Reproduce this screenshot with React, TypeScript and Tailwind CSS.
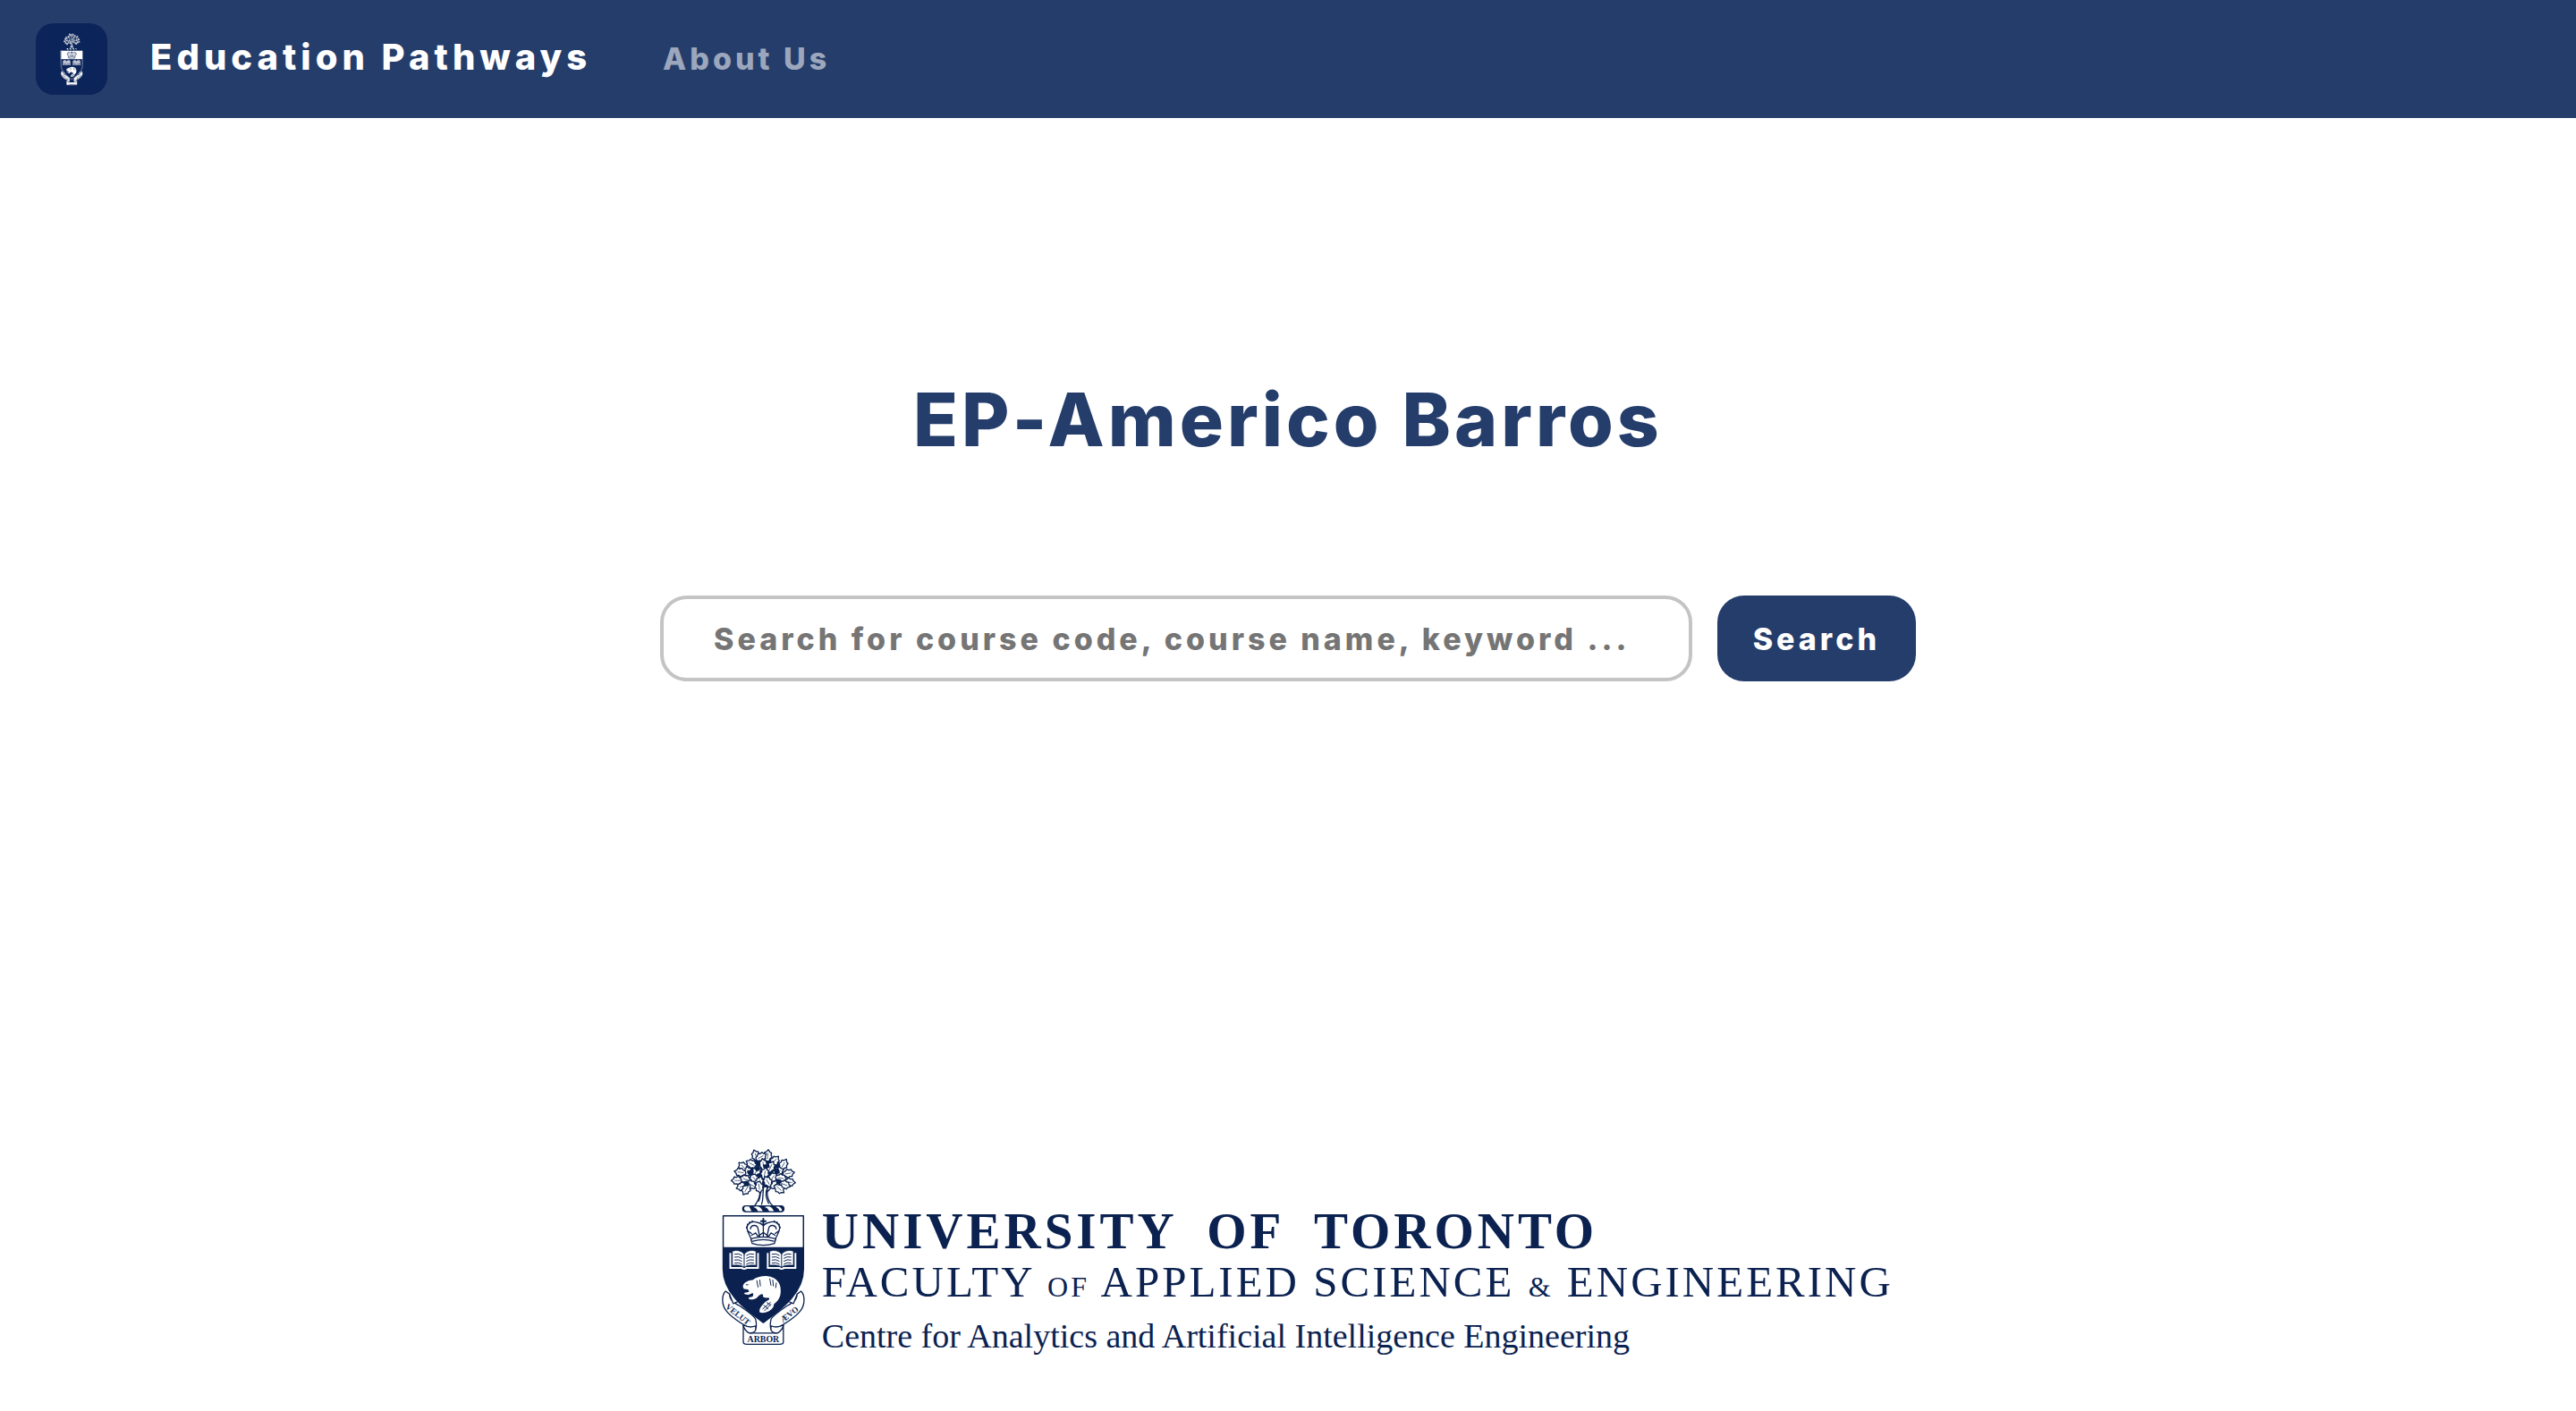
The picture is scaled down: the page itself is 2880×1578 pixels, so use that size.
import type { FormEvent } from 'react';

const LEAVES: [number, number, number][] = [
  [165, 62, -20], [205, 62, 5], [182, 66, 60], [228, 80, 40], [150, 90, -60], [190, 92, -10],
  [215, 100, 25], [122, 100, -45], [258, 92, 30], [240, 115, 70], [140, 118, -20], [168, 112, 30],
  [112, 118, -80], [275, 122, 80], [102, 146, -90], [130, 142, -70], [160, 140, -40], [195, 122, 10],
  [222, 136, 35], [250, 138, 100], [278, 152, 95], [118, 166, -110], [148, 160, -60], [176, 152, 20],
  [205, 150, -30], [232, 160, 60], [262, 160, 110], [132, 176, -150], [176, 168, 170], [244, 174, 130],
];

const BOOK_X = [75, 202];

function Crest({ ink, outline, className }: { ink: string; outline: string; className: string }) {
  return (
    <svg viewBox="40 30 300 680" className={className} fill="none" strokeLinejoin="round" strokeLinecap="round" aria-hidden="true">
      {/* tree */}
      <g stroke={ink} strokeWidth="4" fill="#fff">
        <path d="M172 150c10 30 10 55-12 82h62c-24-22-22-52-14-82l-16 16z" />
        <path d="M192 165c-6 20 0 40-8 62M204 170c-10 20-4 36 4 54M178 172c4 14 2 30-4 44M166 160l16 26M226 160l-22 24" fill="none" />
        <path d="M150 80l90 0 20 60-40 30-80-10-10-30z" fill={ink} />
        {LEAVES.map(([x, y, a], i) => (
          <g key={i} transform={`translate(${x} ${y}) rotate(${a})`}>
            <path d="M0-21l6 8 6 2-1 8 4 6-6 6-2 7-7 3-7-3-2-7-6-6 4-6-1-8 6-2z" />
            <path d="M0-8v18" strokeWidth="2" />
          </g>
        ))}
        <path d="M160 104l14-6 4 10-10 6zM136 116l14-6 4 16-10 4zM226 108l14-2 4 14-12 4zM190 94l18-2 2 8-16 4zM126 150l14 2-2 12-12-2zM234 142l14 2 2 10-14 2z" fill={ink} />
      </g>
      {/* wreath */}
      <rect x="120" y="232" width="140" height="20" rx="10" fill={ink} stroke={ink} strokeWidth="4" />
      <g fill="#fff">
        <path d="M128 234h14l8 16h-18q-12-6-4-16zM166 234q14-2 22 16h-16q-4-10-16-14zM204 234q14-2 22 16h-16q-4-10-16-14zM238 234q12 0 16 14l-8 2q-4-10-14-14z" />
      </g>
      {/* ribbon tails */}
      <g fill="#fff" stroke={ink} strokeWidth="4">
        <path d="M62 522c-14 14-14 46 2 66 20 26 54 46 96 68 8-8 8-20 4-38-2-10-22-24-54-46-24-14-36-24-34-40z" />
        <path d="M318 522c14 14 14 46-2 66-20 26-54 46-96 68-8-8-8-20-4-38 2-10 22-24 54-46 24-14 36-24 34-40z" />
        <path d="M76 534l12 30 18-8-8-30M304 534l-12 30-18-8 8-30" />
        <path d="M122 636v58q0 8 12 8h112q12 0 12-8v-58q-8 18-24 28h-88q-16-10-24-28z" />
        <path d="M122 636q20 12 42 4v14q-4 10-22 10-18-10-20-28zM258 636q-20 12-42 4v14q4 10 22 10 18-10 20-28z" />
      </g>
      {/* shield */}
      <path d="M54 266h272v180c0 76-60 126-136 182C114 572 54 522 54 446z" fill={ink} stroke={outline} strokeWidth="5" />
      <path d="M56 268h268v104H56z" fill="#fff" />
      {/* crown */}
      <g stroke={ink} strokeWidth="4" fill="#fff">
        <path d="M150 350c-4-18-14-26-16-44 2-14 18-24 34-18 10 2 18 6 22 12 4-6 12-10 22-12 16-6 32 4 34 18-2 18-12 26-16 44z" />
        <path d="M146 310c4-16 24-14 26 0l6 28M234 310c-4-16-24-14-26 0l-6 28M190 300v40M150 332l14-8 8 12 18-14 18 14 8-12 14 8M138 318l12 8M242 318l-12 8" />
        <path d="M190 276v20M182 284h16" strokeWidth="6" />
        <path d="M148 344q42-12 84 0l-4 16q-38 12-76 0z" />
        <path d="M154 352q36-10 72 0" />
      </g>
      <path d="M134 306q2-22 28-22M246 306q-2-22-28-22" stroke={ink} strokeWidth="6" strokeDasharray="1 9" />
      {/* books */}
      {BOOK_X.map((x) => (
        <g key={x} transform={`translate(${x} 384)`}>
          <path d="M0 8h6v48h38l6 4 6-4h38V8h6v54H60q-10 6-20 0H0z" fill="#fff" />
          <path d="M50 12Q34-6 10 2v48q26-4 40 6 14-10 40-6V2Q66-6 50 12z" fill="#fff" stroke={ink} strokeWidth="2" />
          <path d="M50 12v42M18 12q14-4 24 4M18 22q14-4 24 4M18 32q14-4 24 4M18 42q14-4 24 4M82 12q-14-4-24 4M82 22q-14-4-24 4M82 32q-14-4-24 4M82 42q-14-4-24 4" stroke={ink} strokeWidth="3" />
        </g>
      ))}
      {/* beaver */}
      <path
        d="M122 500q8-14 32-16 16-14 46-14 30 2 42 22 10 16 6 42-4 18-22 32 0 14-18 24-16 8-30 4-4-8 6-22 12-16 26-22 2-6-4-6-12 2-18-4 4-8-4-8-10 4-14 10-8 8-24 8-8-2-6-6l14-4q4-8 0-12l-14 6q-14 0-16-6l18-4-4-8-14-2q-6-6-2-14z"
        fill="#fff"
      />
      <path d="M168 486l4 22M178 484l2 20M212 480l4 22M222 484l2 20M234 494l-2 16M132 500h6M188 582l26-22M194 588l22-22M192 570l14 12M202 560l12 10" stroke={ink} strokeWidth="3" />
      <g fill={ink} fontFamily="'Liberation Serif', serif" fontWeight="700" textAnchor="middle">
        <text x="190" y="694" fontSize="30">ARBOR</text>
        <text fontSize="28" transform="translate(98 608) rotate(38)">VELUT</text>
        <text fontSize="28" transform="translate(284 608) rotate(-38)">ÆVO</text>
      </g>
    </svg>
  );
}

function Navbar() {
  return (
    <header className="flex h-33 items-center bg-[#253d6b] px-10">
      <a href="#home" className="flex items-center gap-12 text-white">
        <span className="flex size-20 items-center justify-center rounded-[20px] bg-[#0b2459]">
          <Crest ink="#0b2459" outline="#ffffff" className="h-15" />
        </span>
        <span className="pb-1 text-[40px] leading-none font-extrabold tracking-[5px]">Education Pathways</span>
      </a>
      <nav className="ml-20">
        <a href="#about" className="text-[34px] leading-none font-extrabold tracking-[4px] text-[#9ca7bd]">
          About Us
        </a>
      </nav>
    </header>
  );
}

function SearchForm() {
  const onSubmit = (event: FormEvent) => event.preventDefault();
  return (
    <form onSubmit={onSubmit} className="mt-[146px] flex w-full max-w-[1404px] items-center gap-7">
      <input
        type="text"
        aria-label="Search courses"
        placeholder="Search for course code, course name, keyword ..."
        className="h-24 min-w-0 flex-1 rounded-[30px] border-4 border-[#c4c4c4] bg-white pr-5 pl-14 text-[34px] font-extrabold tracking-[4px] text-[#757575] placeholder:text-[#757575] placeholder:opacity-100"
      />
      <button type="submit" className="h-24 rounded-[30px] bg-[#253d6b] px-10 text-[34px] font-extrabold tracking-[4px] text-white">
        Search
      </button>
    </form>
  );
}

function UniversityLogo() {
  return (
    <footer className="mt-auto flex w-full max-w-[1272px] items-end gap-4 pb-14 text-[#0b2250]">
      <Crest ink="#0b2250" outline="#0b2250" className="mb-4 h-56 shrink-0" />
      <div className="flex flex-col font-['Liberation_Serif',serif] whitespace-nowrap">
        <p className="text-[57px] leading-[60px] font-bold tracking-[4px]">UNIVERSITY&ensp;OF&ensp;TORONTO</p>
        <p className="text-[49px] leading-[54px] tracking-[3px]">
          FACULTY <span className="text-[32px]">OF</span> APPLIED SCIENCE <span className="text-[32px]">&amp;</span> ENGINEERING
        </p>
        <p className="text-[38px] leading-[56px]">Centre for Analytics and Artificial Intelligence Engineering</p>
      </div>
    </footer>
  );
}

export default function App() {
  return (
    <div className="flex min-h-screen flex-col bg-white font-[Inter,sans-serif]">
      <Navbar />
      <main className="flex flex-1 flex-col items-center">
        <h1 className="mt-72 text-[82px] leading-[100px] font-extrabold tracking-[4px] text-[#253d6b]">EP-Americo Barros</h1>
        <SearchForm />
        <UniversityLogo />
      </main>
    </div>
  );
}
